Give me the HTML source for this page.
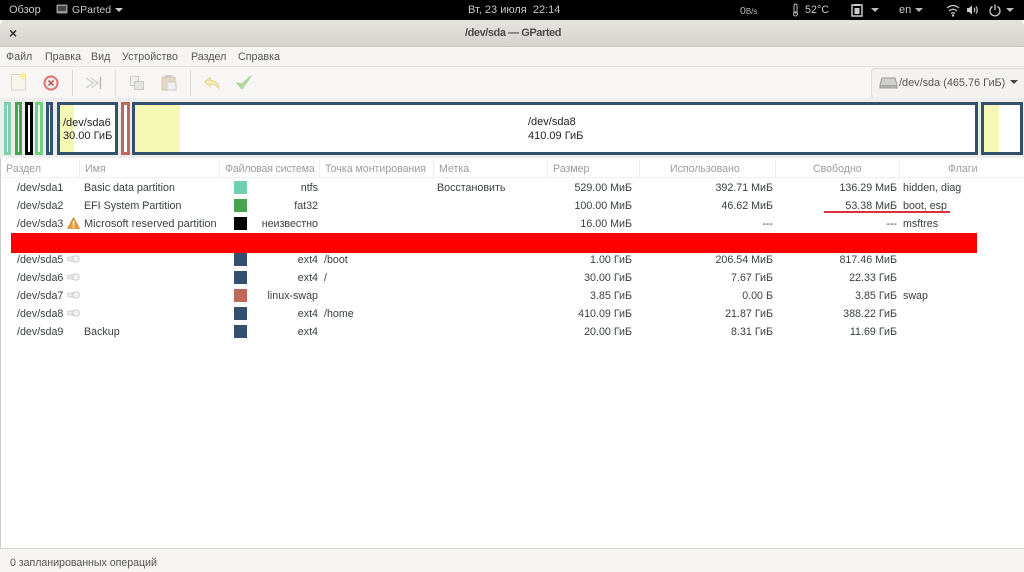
<!DOCTYPE html>
<html><head><meta charset="utf-8"><style>
*{box-sizing:border-box}
html,body{margin:0;padding:0;width:1024px;height:572px;overflow:hidden;background:#fff;font-family:"Liberation Sans","DejaVu Sans",sans-serif;font-size:10.7px;color:#3a3f40}
.a{position:absolute;white-space:nowrap;line-height:14px;margin-top:1px}
.r{position:absolute;white-space:nowrap;line-height:14px;text-align:right;margin-top:1px}
.top{color:#c9c9c9;font-size:11px}
.hd{color:#9a9d9d;top:161px;font-size:10.6px}
.sw{position:absolute;left:234px;width:13px;height:13px}
.p{position:absolute;top:102px;height:53px;background:#fff;border:3px solid #34506e}
.sep{position:absolute;top:70px;width:1px;height:26px;background:#dcdad5}
.key{position:absolute;left:67px;width:13px;height:8px}
</style></head><body>
<div style="position:absolute;left:0;top:0;width:1024px;height:20px;background:#000"></div>
<div class="a top" style="left:9px;top:2px">Обзор</div>
<svg style="position:absolute;left:56px;top:4px" width="12" height="11"><rect x=".5" y=".5" width="11" height="9" rx="1" fill="#999"/><rect x="2" y="2" width="8" height="5" fill="#444"/></svg>
<div class="a top" style="left:72px;top:2px;font-size:10.5px">GParted</div>
<div style="position:absolute;left:115px;top:8px;border:4px solid transparent;border-top:4px solid #ccc"></div>
<div class="a top" style="left:468px;top:2px">Вт, 23 июля&nbsp; 22:14</div>
<div class="a" style="left:740px;top:3px;color:#bbb;font-size:8px"><span style="font-size:10.5px">0</span>B/s</div>
<svg style="position:absolute;left:792px;top:3px" width="7" height="14"><rect x="2" y="1" width="3" height="9" rx="1.5" fill="none" stroke="#bbb"/><circle cx="3.5" cy="11" r="2" fill="none" stroke="#bbb"/></svg>
<div class="a top" style="left:805px;top:2px;font-size:10.6px;letter-spacing:.1px">52°C</div>
<svg style="position:absolute;left:851px;top:3px" width="12" height="14"><rect x="1" y="2" width="10" height="11" fill="none" stroke="#ccc" stroke-width="1.5"/><rect x="3" y="1" width="6" height="2" fill="#ccc"/><rect x="3.5" y="5" width="5" height="6" fill="#ccc"/></svg>
<div style="position:absolute;left:871px;top:8px;border:4px solid transparent;border-top:4px solid #bbb"></div>
<div class="a top" style="left:899px;top:2px">en</div>
<div style="position:absolute;left:915px;top:8px;border:4px solid transparent;border-top:4px solid #bbb"></div>
<svg style="position:absolute;left:946px;top:3px" width="14" height="14"><path d="M1 5Q7 0 13 5M3 8Q7 4.500 11 8M5 10.500Q7 9 9 10.500" fill="none" stroke="#ccc" stroke-width="1.300"/><circle cx="7" cy="12.500" r="1.200" fill="#ccc"/></svg>
<svg style="position:absolute;left:966px;top:3px" width="14" height="14"><path d="M1 5H3L6 2.500V11.500L3 9H1Z" fill="#ccc"/><path d="M8 5Q9.500 7 8 9M10 3.500Q12.500 7 10 10.500" fill="none" stroke="#ccc" stroke-width="1.200"/></svg>
<svg style="position:absolute;left:988px;top:3px" width="14" height="14"><path d="M4.500 3.500A5 5 0 1 0 9.500 3.500M7 1.500V7" fill="none" stroke="#ccc" stroke-width="1.300"/></svg>
<div style="position:absolute;left:1006px;top:8px;border:4px solid transparent;border-top:4px solid #bbb"></div>

<div style="position:absolute;left:0;top:20px;width:1024px;height:27px;background:linear-gradient(#e6e4df,#d6d3cd);border-bottom:1px solid #c4c1ba;border-radius:5px 5px 0 0"></div>
<div class="a" style="left:9px;top:25px;color:#333;font-weight:bold;font-size:14px">×</div>
<div class="a" style="left:465px;top:25px;font-weight:bold;color:#4a4d4d;font-size:11px;letter-spacing:-.44px">/dev/sda — GParted</div>
<div style="position:absolute;left:0;top:47px;width:1024px;height:20px;background:#f6f5f3;border-bottom:1px solid #e4e2de"></div>
<div class="a" style="left:6px;top:49px;color:#555">Файл</div>
<div class="a" style="left:45px;top:49px;color:#555">Правка</div>
<div class="a" style="left:91px;top:49px;color:#555">Вид</div>
<div class="a" style="left:122px;top:49px;color:#555">Устройство</div>
<div class="a" style="left:191px;top:49px;color:#555">Раздел</div>
<div class="a" style="left:238px;top:49px;color:#555">Справка</div>
<div style="position:absolute;left:0;top:67px;width:1024px;height:31px;background:#f7f6f4"></div>
<svg style="position:absolute;left:8px;top:70px" width="22" height="24"><rect x="3.500" y="4.500" width="14" height="15.500" fill="#f7f6ec" stroke="#d8d6cc"/><circle cx="15" cy="6" r="3.500" fill="#f2efa0"/></svg>
<svg style="position:absolute;left:42px;top:74px" width="18" height="18"><circle cx="9" cy="9" r="6.500" fill="#eee" stroke="#db7c7c" stroke-width="2.200"/><path d="M6.500 6.500L11.500 11.500M11.500 6.500L6.500 11.500" stroke="#b05050" stroke-width="1.500"/></svg>
<div class="sep" style="left:72px"></div>
<svg style="position:absolute;left:84px;top:74px" width="20" height="18"><path d="M2 4L9 9L2 14M7 4L14 9L7 14" fill="none" stroke="#d4d4d0" stroke-width="1.500"/><path d="M16.500 3V15" stroke="#bcbcb8" stroke-width="1.500"/></svg>
<div class="sep" style="left:115px"></div>
<svg style="position:absolute;left:128px;top:74px" width="18" height="18"><rect x="2.500" y="2.500" width="8" height="9" fill="#eee" stroke="#ccc"/><rect x="6.500" y="7.500" width="9" height="8" fill="#e2e2de" stroke="#c8c8c4"/></svg>
<svg style="position:absolute;left:160px;top:74px" width="18" height="18"><rect x="2" y="3" width="13" height="13" rx="1" fill="#e5d8bf" stroke="#d5c8ac"/><rect x="5" y="1" width="7" height="3" fill="#ccc"/><rect x="7" y="8" width="9" height="8" fill="#eee" stroke="#ccc"/></svg>
<div class="sep" style="left:190px"></div>
<svg style="position:absolute;left:202px;top:74px" width="20" height="18"><path d="M2.500 8L8 3.500V6.500Q16 6.500 17 14Q14 10 8 10V12.500Z" fill="#f4eebd" stroke="#e0d48a"/></svg>
<svg style="position:absolute;left:234px;top:73px" width="20" height="19"><path d="M3 10L8 16L17 3L8 11Z" fill="#b5dea0" stroke="#a5cf90"/></svg>
<div style="position:absolute;left:871px;top:68px;width:153px;height:31px;background:#f3f2ef;border:1px solid #dedcd7;border-right:0;border-radius:4px 0 0 4px"></div>
<svg style="position:absolute;left:879px;top:76px" width="19" height="14"><path d="M3 2H16L18 9V12H1V9Z" fill="#cfcfcc" stroke="#999"/><rect x="1.500" y="9" width="16" height="3" fill="#aaa"/></svg>
<div class="a" style="left:899px;top:75px;color:#555;font-size:10.9px">/dev/sda (465.76 ГиБ)</div>
<div style="position:absolute;left:1010px;top:80px;border:4px solid transparent;border-top:4px solid #444"></div>
<div style="position:absolute;left:0;top:98px;width:1024px;height:60px;background:#ededeb"></div>

<div class="p" style="left:4px;width:7px;border-color:#7dd0b0"></div>
<div class="p" style="left:15px;width:7px;border-color:#47a54d"></div>
<div class="p" style="left:25px;width:8px;border-color:#000"></div>
<div class="p" style="left:35px;width:8px;border-color:#70d080"></div>
<div class="p" style="left:46px;width:7px"></div>
<div class="p" style="left:57px;width:61px"><div style="position:absolute;left:0;top:0;width:14px;height:47px;background:#f5f7b5"></div></div>
<div class="a" style="left:63px;top:115px;color:#222;z-index:2;font-size:11px">/dev/sda6</div>
<div class="a" style="left:63px;top:128px;color:#222;z-index:2;font-size:11px">30.00 ГиБ</div>
<div class="p" style="left:121px;width:9px;border-color:#c0675c"></div>
<div class="p" style="left:132px;width:846px"><div style="position:absolute;left:0;top:0;width:45px;height:47px;background:#f5f7b5"></div></div>
<div class="a" style="left:528px;top:114px;color:#222;font-size:11px">/dev/sda8</div>
<div class="a" style="left:528px;top:128px;color:#222;font-size:11px">410.09 ГиБ</div>
<div class="p" style="left:981px;width:42px"><div style="position:absolute;left:0;top:0;width:15px;height:47px;background:#f5f7b5"></div></div>

<div style="position:absolute;left:0;top:158px;width:1024px;height:20px;background:#fff;border-left:1px solid #ccc;border-bottom:1px solid #f0efed"></div>
<div style="position:absolute;left:79px;top:160px;width:1px;height:17px;background:#eee"></div>
<div style="position:absolute;left:219px;top:160px;width:1px;height:17px;background:#eee"></div>
<div style="position:absolute;left:319px;top:160px;width:1px;height:17px;background:#eee"></div>
<div style="position:absolute;left:433px;top:160px;width:1px;height:17px;background:#eee"></div>
<div style="position:absolute;left:547px;top:160px;width:1px;height:17px;background:#eee"></div>
<div style="position:absolute;left:639px;top:160px;width:1px;height:17px;background:#eee"></div>
<div style="position:absolute;left:775px;top:160px;width:1px;height:17px;background:#eee"></div>
<div style="position:absolute;left:899px;top:160px;width:1px;height:17px;background:#eee"></div>
<div class="a hd" style="left:6px">Раздел</div>
<div class="a hd" style="left:85px">Имя</div>
<div class="a hd" style="left:225px;letter-spacing:-.18px">Файловая система</div>
<div class="a hd" style="left:325px">Точка монтирования</div>
<div class="a hd" style="left:439px">Метка</div>
<div class="a hd" style="left:553px">Размер</div>
<div class="a hd" style="left:670px">Использовано</div>
<div class="a hd" style="left:813px">Свободно</div>
<div class="a hd" style="left:948px">Флаги</div>

<div class="a" style="left:17px;top:180px">/dev/sda1</div><div class="a" style="left:84px;top:180px">Basic data partition</div><div class="sw" style="top:181px;background:#70d0b0"></div><div class="r" style="right:706px;top:180px">ntfs</div><div class="a" style="left:437px;top:180px">Восстановить</div><div class="r" style="right:392px;top:180px">529.00 МиБ</div><div class="r" style="right:251px;top:180px">392.71 МиБ</div><div class="r" style="right:127px;top:180px">136.29 МиБ</div><div class="a" style="left:903px;top:180px">hidden, diag</div>
<div class="a" style="left:17px;top:198px">/dev/sda2</div><div class="a" style="left:84px;top:198px">EFI System Partition</div><div class="sw" style="top:199px;background:#47a54d"></div><div class="r" style="right:706px;top:198px">fat32</div><div class="r" style="right:392px;top:198px">100.00 МиБ</div><div class="r" style="right:251px;top:198px">46.62 МиБ</div><div class="r" style="right:127px;top:198px">53.38 МиБ</div><div class="a" style="left:903px;top:198px">boot, esp</div>
<div style="position:absolute;left:824px;top:211px;width:126px;height:2px;background:#d9333f"></div>
<div class="a" style="left:17px;top:216px">/dev/sda3</div>
<svg style="position:absolute;left:67px;top:217px" width="13" height="12"><path d="M6.500 .5L12.500 11.500H.5Z" fill="#ea9a3c" stroke="#c87a20" stroke-width=".6"/><rect x="5.800" y="4" width="1.400" height="4.500" fill="#fff"/><rect x="5.800" y="9.200" width="1.400" height="1.400" fill="#fff"/></svg>
<div class="a" style="left:84px;top:216px;font-size:11px">Microsoft reserved partition</div><div class="sw" style="top:217px;background:#000"></div><div class="r" style="right:706px;top:216px">неизвестно</div><div class="r" style="right:392px;top:216px">16.00 МиБ</div><div class="r" style="right:251px;top:216px">---</div><div class="r" style="right:127px;top:216px">---</div><div class="a" style="left:903px;top:216px">msftres</div>
<div style="position:absolute;left:11px;top:233px;width:966px;height:20px;background:#ff0000"></div>
<div class="a" style="left:17px;top:252px">/dev/sda5</div><svg class="key" style="top:255px" viewBox="0 0 13 8"><path d="M0 2.500L6 1.500V6.500L0 5.500Z" fill="#e8e8e8" stroke="#ccc" stroke-width=".7"/><circle cx="9" cy="4" r="3.200" fill="#f4f4f4" stroke="#ccc"/></svg><div class="sw" style="top:253px;background:#34506e"></div><div class="r" style="right:706px;top:252px">ext4</div><div class="a" style="left:324px;top:252px">/boot</div><div class="r" style="right:392px;top:252px">1.00 ГиБ</div><div class="r" style="right:251px;top:252px">206.54 МиБ</div><div class="r" style="right:127px;top:252px">817.46 МиБ</div>
<div class="a" style="left:17px;top:270px">/dev/sda6</div><svg class="key" style="top:273px" viewBox="0 0 13 8"><path d="M0 2.500L6 1.500V6.500L0 5.500Z" fill="#e8e8e8" stroke="#ccc" stroke-width=".7"/><circle cx="9" cy="4" r="3.200" fill="#f4f4f4" stroke="#ccc"/></svg><div class="sw" style="top:271px;background:#34506e"></div><div class="r" style="right:706px;top:270px">ext4</div><div class="a" style="left:324px;top:270px">/</div><div class="r" style="right:392px;top:270px">30.00 ГиБ</div><div class="r" style="right:251px;top:270px">7.67 ГиБ</div><div class="r" style="right:127px;top:270px">22.33 ГиБ</div>
<div class="a" style="left:17px;top:288px">/dev/sda7</div><svg class="key" style="top:291px" viewBox="0 0 13 8"><path d="M0 2.500L6 1.500V6.500L0 5.500Z" fill="#e8e8e8" stroke="#ccc" stroke-width=".7"/><circle cx="9" cy="4" r="3.200" fill="#f4f4f4" stroke="#ccc"/></svg><div class="sw" style="top:289px;background:#c0675c"></div><div class="r" style="right:706px;top:288px">linux-swap</div><div class="r" style="right:392px;top:288px">3.85 ГиБ</div><div class="r" style="right:251px;top:288px">0.00 Б</div><div class="r" style="right:127px;top:288px">3.85 ГиБ</div><div class="a" style="left:903px;top:288px">swap</div>
<div class="a" style="left:17px;top:306px">/dev/sda8</div><svg class="key" style="top:309px" viewBox="0 0 13 8"><path d="M0 2.500L6 1.500V6.500L0 5.500Z" fill="#e8e8e8" stroke="#ccc" stroke-width=".7"/><circle cx="9" cy="4" r="3.200" fill="#f4f4f4" stroke="#ccc"/></svg><div class="sw" style="top:307px;background:#34506e"></div><div class="r" style="right:706px;top:306px">ext4</div><div class="a" style="left:324px;top:306px">/home</div><div class="r" style="right:392px;top:306px">410.09 ГиБ</div><div class="r" style="right:251px;top:306px">21.87 ГиБ</div><div class="r" style="right:127px;top:306px">388.22 ГиБ</div>
<div class="a" style="left:17px;top:324px">/dev/sda9</div><div class="a" style="left:84px;top:324px">Backup</div><div class="sw" style="top:325px;background:#34506e"></div><div class="r" style="right:706px;top:324px">ext4</div><div class="r" style="right:392px;top:324px">20.00 ГиБ</div><div class="r" style="right:251px;top:324px">8.31 ГиБ</div><div class="r" style="right:127px;top:324px">11.69 ГиБ</div>

<div style="position:absolute;left:0;top:178px;width:1px;height:370px;background:#ccc"></div>
<div style="position:absolute;left:0;top:548px;width:1024px;height:24px;background:#f6f5f3;border-top:1px solid #d8d6d1"></div>
<div class="a" style="left:10px;top:555px;color:#555;letter-spacing:-.06px">0 запланированных операций</div>
</body></html>
